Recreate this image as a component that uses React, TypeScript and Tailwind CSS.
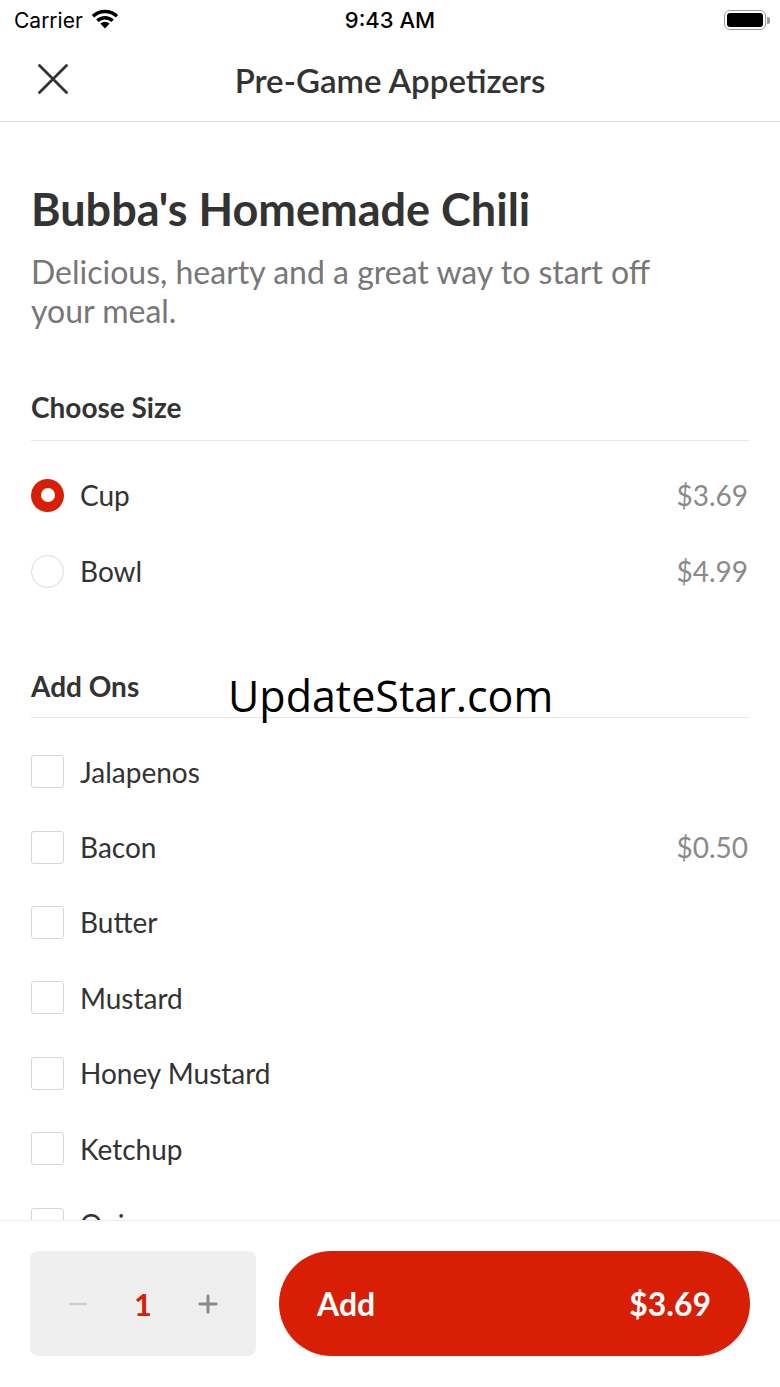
import { Minus, Plus } from 'lucide-react'

const sizes = [
  { name: 'Cup', price: '$3.69', selected: true },
  { name: 'Bowl', price: '$4.99', selected: false },
]

const addOns = [
  { name: 'Jalapenos' },
  { name: 'Bacon', price: '$0.50' },
  { name: 'Butter' },
  { name: 'Mustard' },
  { name: 'Honey Mustard' },
  { name: 'Ketchup' },
  { name: 'Onions' },
  { name: 'Cheese' },
]

function StatusBar() {
  return (
    <div className="h-[40px] flex items-center justify-between px-[14px] font-['Inter',sans-serif] text-black relative">
      <div className="flex items-center gap-[8px] text-[21px] leading-none">
        <span>Carrier</span>
        <svg width="28" height="20" viewBox="0 0 28 20" className="mt-[-3px]">
          <path d="M14 19.5 L9.3 14.6 A7 7 0 0 1 18.7 14.6 Z" fill="black" />
          <path d="M5.2 10.4 A12.8 12.8 0 0 1 22.8 10.4 L20.4 12.9 A9.4 9.4 0 0 0 7.6 12.9 Z" fill="black" />
          <path d="M0.8 6 A19 19 0 0 1 27.2 6 L24.8 8.5 A15.6 15.6 0 0 0 3.2 8.5 Z" fill="black" />
        </svg>
      </div>
      <span className="absolute left-1/2 -translate-x-1/2 text-[22px] font-medium leading-none">9:43 AM</span>
      <div className="flex items-center mr-[-4px]">
        <div className="w-[42px] h-[20px] rounded-[6px] border-[1.5px] border-[#9a9a9a] p-[2px]">
          <div className="w-full h-full rounded-[3px] bg-black" />
        </div>
        <div className="w-[3px] h-[7px] rounded-r-[2px] bg-[#9a9a9a] ml-[1px]" />
      </div>
    </div>
  )
}

function Radio({ selected }: { selected: boolean }) {
  return selected ? (
    <div className="w-[33px] h-[33px] rounded-full bg-[#d81e05] flex items-center justify-center">
      <div className="w-[14px] h-[14px] rounded-full bg-white" />
    </div>
  ) : (
    <div className="w-[33px] h-[33px] rounded-full border-[1.5px] border-[#dadada] bg-white" />
  )
}

function Checkbox() {
  return <div className="w-[33px] h-[33px] rounded-[3px] border-[1.5px] border-[#d6d6d6] bg-white" />
}

export default function App() {
  return (
    <div className="w-[780px] h-[1387px] bg-white flex flex-col overflow-hidden relative font-['Lato',sans-serif] text-[#333333]">
      <StatusBar />

      {/* Nav bar */}
      <div className="h-[82px] flex items-center justify-center relative border-b border-[#dcdcdc]">
        <button className="absolute left-[38px] top-[24px] w-[30px] h-[30px]">
          <svg width="30" height="30" viewBox="0 0 30 30">
            <path d="M1.5 1.5 L28.5 28.5 M28.5 1.5 L1.5 28.5" stroke="#333" strokeWidth="2.8" strokeLinecap="round" />
          </svg>
        </button>
        <h1 className="text-[33px] font-semibold leading-[40px] mt-[-2px]">Pre-Game Appetizers</h1>
      </div>

      {/* Scrollable content */}
      <div className="flex-1 overflow-hidden px-[31px]">
        <h2 className="mt-[61px] text-[45px] font-bold leading-[52px]">Bubba's Homemade Chili</h2>
        <p className="mt-[17px] text-[32px] leading-[39px] text-[#777777] pr-[60px]">
          Delicious, hearty and a great way to start off your meal.
        </p>

        {/* Choose Size */}
        <div className="mt-[62px] pb-[18px] border-b border-[#e6e6e6]">
          <h3 className="text-[28px] font-bold leading-[30px]">Choose Size</h3>
        </div>
        <div className="pt-[16px]">
          {sizes.map(s => (
            <div key={s.name} className="h-[76px] flex items-center">
              <Radio selected={s.selected} />
              <span className="ml-[16px] text-[28px] flex-1">{s.name}</span>
              <span className="text-[28px] text-[#8a8a8a] mr-[1px]">{s.price}</span>
            </div>
          ))}
        </div>

        {/* Add Ons */}
        <div className="mt-[62px] pb-[16px] border-b border-[#e6e6e6]">
          <h3 className="text-[28px] font-bold leading-[30px]">Add Ons</h3>
        </div>
        <div className="pt-[16px]">
          {addOns.map(a => (
            <div key={a.name} className="h-[75.4px] flex items-center">
              <Checkbox />
              <span className="ml-[16px] text-[28px] flex-1">{a.name}</span>
              {a.price && <span className="text-[28px] text-[#8a8a8a] mr-[1px]">{a.price}</span>}
            </div>
          ))}
        </div>
      </div>

      {/* Footer */}
      <div className="h-[167px] border-t border-[#ececec] bg-white px-[30px] pt-[30px] flex gap-[23px]">
        <div className="w-[226px] h-[105px] rounded-[8px] bg-[#efefef] flex items-center justify-center gap-[25px]">
          <div className="w-[40px] flex justify-center">
            <Minus size={26} strokeWidth={2.5} className="text-[#cfcfcf]" />
          </div>
          <div className="w-[40px] text-center text-[31px] font-bold text-[#d81e05] leading-[40px]">1</div>
          <div className="w-[40px] flex justify-center">
            <Plus size={28} strokeWidth={2.5} className="text-[#8a8a8a]" />
          </div>
        </div>
        <button className="flex-1 h-[105px] rounded-full bg-[#d81e05] flex items-center justify-between pl-[38px] pr-[39px] text-white text-[32px] font-bold">
          <span>Add</span>
          <span>$3.69</span>
        </button>
      </div>

      {/* Watermark */}
      <div className="absolute left-[228px] top-[674px] text-[43px] leading-none text-black font-['Open_Sans',sans-serif] pointer-events-none">
        UpdateStar.com
      </div>
    </div>
  )
}
